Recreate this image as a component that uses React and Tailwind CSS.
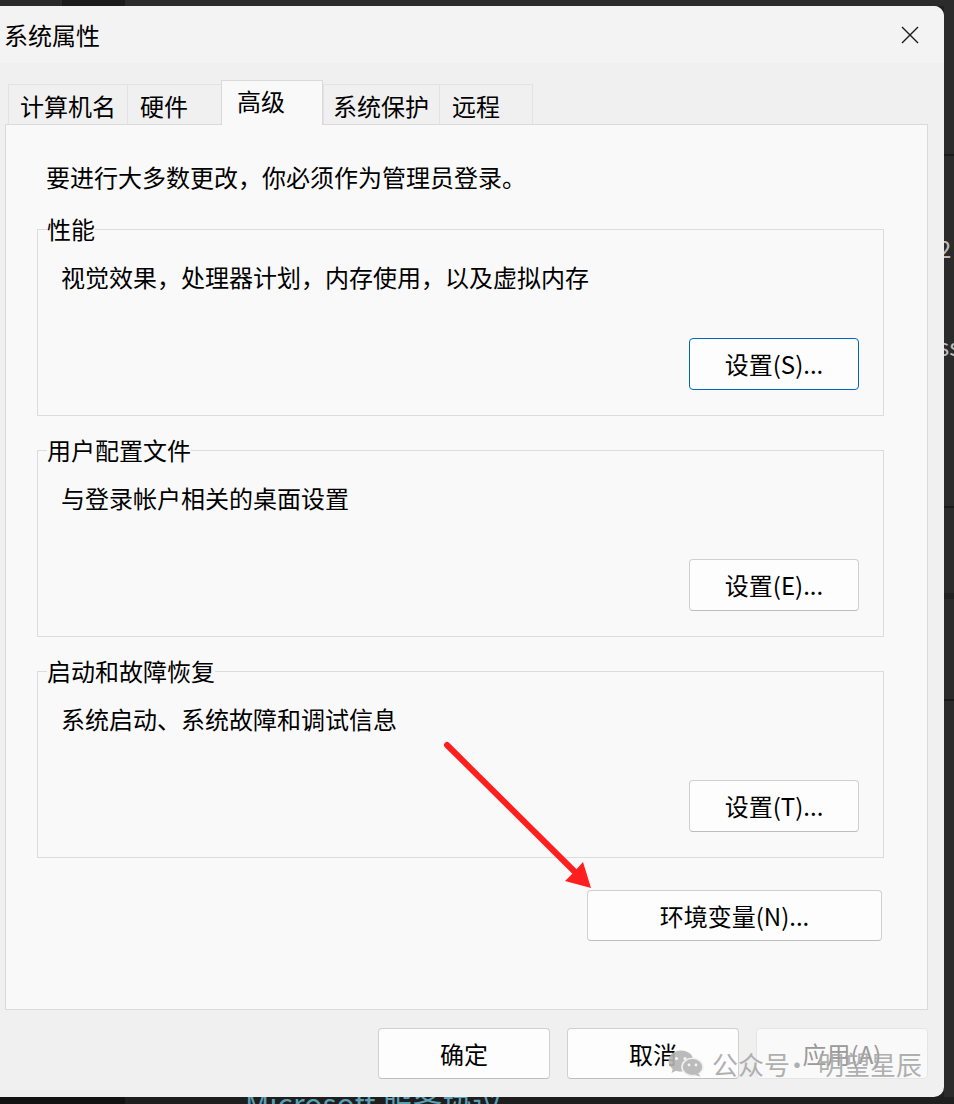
import React from "react";

const font = "font-['Noto_Sans_CJK_SC',sans-serif]";

const tabs = [
  { label: "计算机名", w: "w-[119px]", pl: "pl-[11px]" },
  { label: "硬件", w: "w-[94px]", pl: "pl-[12px]" },
  { label: "高级", w: "w-[102px]", pl: "pl-[15px]", active: true },
  { label: "系统保护", w: "w-[116px]", pl: "pl-[9px]" },
  { label: "远程", w: "w-[94px]", pl: "pl-[12px]", last: true },
];

const groups = [
  { title: "性能", desc: "视觉效果，处理器计划，内存使用，以及虚拟内存", btn: "设置(S)...", focused: true },
  { title: "用户配置文件", desc: "与登录帐户相关的桌面设置", btn: "设置(E)..." },
  { title: "启动和故障恢复", desc: "系统启动、系统故障和调试信息", btn: "设置(T)..." },
];

const WinButton = ({ children, className = "", focused, disabled }) => (
  <button
    className={`flex items-center justify-center rounded-[4px] border text-[24px] leading-none ${
      focused
        ? "border-[#0067c0] bg-[#fdfdfd] text-black"
        : disabled
        ? "border-[#e5e5e5] bg-[#f9f9f9] text-[#9a9a9a]"
        : "border-[#d0d0d0] border-b-[#bdbdbd] bg-[#fdfdfd] text-black"
    } ${className}`}
  >
    {children}
  </button>
);

const WeChatIcon = () => (
  <svg width="36" height="27" viewBox="0 0 36 27">
    <ellipse cx="13" cy="11" rx="12.5" ry="10.5" fill="#b4b4b4" />
    <path d="M5 18 L3.5 23 L9.5 20 Z" fill="#b4b4b4" />
    <circle cx="8.5" cy="8.5" r="1.6" fill="#f2f2f2" />
    <circle cx="17" cy="8.5" r="1.6" fill="#f2f2f2" />
    <ellipse cx="24.5" cy="17" rx="10.5" ry="8.8" fill="#b4b4b4" stroke="#f0f0f0" strokeWidth="1.6" />
    <path d="M30 23 L32.5 26.5 L26.5 25 Z" fill="#b4b4b4" />
    <circle cx="21" cy="15" r="1.4" fill="#f2f2f2" />
    <circle cx="28" cy="15" r="1.4" fill="#f2f2f2" />
  </svg>
);

export default function App() {
  return (
    <div className={`relative flex h-[1104px] w-[954px] flex-col overflow-hidden bg-[#1f1f1f] ${font}`}>
      {/* top strip of the window behind */}
      <div className="flex h-[6px] shrink-0">
        <div className="w-[62px] bg-[#2a2a2a]" />
        <div className="w-[63px] bg-[#1b1b1b]" />
        <div className="flex-1 bg-[#2b2b2b]" />
      </div>

      <div className="flex h-[1091px] shrink-0">
        {/* dialog */}
        <div className="flex w-[944px] flex-col overflow-hidden rounded-r-[10px] bg-[#f0f0f0]">
          {/* title bar */}
          <div className="flex h-[57px] shrink-0 items-center justify-between bg-[#f3f3f3] pl-[4px] pr-[24px]">
            <span className="text-[24px] leading-6 text-black">系统属性</span>
            <svg width="20" height="20" viewBox="0 0 20 20">
              <path d="M2 2 L18 18 M18 2 L2 18" stroke="#1a1a1a" strokeWidth="1.4" />
            </svg>
          </div>

          <div className="px-[5px] pt-[17px]">
            {/* tabs */}
            <div className="relative z-10 -mb-px flex h-[45px] items-start pl-[3px]">
              {tabs.map((t) =>
                t.active ? (
                  <div
                    key={t.label}
                    className={`${t.w} ${t.pl} h-[45px] border border-b-0 border-[#dadada] bg-[#f9f9f9] pt-[8px] text-[24px] leading-6 text-black`}
                  >
                    {t.label}
                  </div>
                ) : (
                  <div
                    key={t.label}
                    className={`${t.w} ${t.pl} mt-[4px] h-[40px] border-l border-t border-[#e2e2e2] ${
                      t.last ? "border-r" : ""
                    } bg-[#f0f0f0] pt-[9px] text-[24px] leading-6 text-black`}
                  >
                    {t.label}
                  </div>
                )
              )}
            </div>

            {/* tab page */}
            <div className="h-[886px] w-[923px] border border-[#dadada] bg-[#f9f9f9] pt-[40px]">
              <div className="pl-[40px] text-[24px] leading-6 text-black">
                要进行大多数更改，你必须作为管理员登录。
              </div>

              <div className="mt-[28px] flex w-[878px] flex-col pl-[31px]">
                {groups.map((g, i) => (
                  <fieldset
                    key={g.title}
                    className={`w-[847px] border border-[#dcdcdc] ${i > 0 ? "mt-[22px]" : ""}`}
                  >
                    <legend className="ml-[9px] text-[24px] leading-6 text-black">{g.title}</legend>
                    <div className="mt-[24px] pl-[23px] text-[24px] leading-6 text-black">{g.desc}</div>
                    <div className="mb-[25px] mt-[49px] flex justify-end pr-[24px]">
                      <WinButton focused={g.focused} className="h-[52px] w-[170px]">
                        {g.btn}
                      </WinButton>
                    </div>
                  </fieldset>
                ))}

                <div className="mt-[32px] flex justify-end pr-[2px]">
                  <WinButton className="h-[51px] w-[295px]">环境变量(N)...</WinButton>
                </div>
              </div>
            </div>
          </div>

          {/* dialog buttons */}
          <div className="flex justify-end gap-[17px] pr-[16px] pt-[18px]">
            <WinButton className="h-[51px] w-[172px]">确定</WinButton>
            <WinButton className="h-[51px] w-[172px]">取消</WinButton>
            <WinButton disabled className="h-[51px] w-[172px]">应用(A)</WinButton>
          </div>
        </div>

        {/* window behind, right edge */}
        <div className="flex w-[10px] flex-col overflow-hidden bg-[#2b2b2b]">
          <div className="h-[148px] shrink-0" />
          <div className="h-[2px] shrink-0 bg-[#1a1a1a]" />
          <div className="mt-[80px] -ml-[6px] text-[24px] leading-6 text-[#bdbdbd]">2</div>
          <div className="mt-[74px] -ml-[6px] text-[24px] leading-6 text-[#bdbdbd]">ss</div>
          <div className="mt-[148px] h-[2px] shrink-0 bg-[#1a1a1a]" />
          <div className="mt-[85px] h-[6px] shrink-0 bg-[#222222]" />
          <div className="mt-[100px] h-[2px] shrink-0 bg-[#1a1a1a]" />
        </div>
      </div>

      {/* bottom strip of the window behind */}
      <div className="flex h-[7px] shrink-0 overflow-hidden">
        <div className="w-[125px] bg-[#121212]" />
        <div className="flex-1 bg-[#1e1e1e] pl-[120px]">
          <div className="-mt-[10px] whitespace-nowrap text-[30px] leading-none text-[#5a9fb5]">
            Microsoft 服务协议
          </div>
        </div>
      </div>

      {/* red annotation arrow */}
      <svg className="pointer-events-none absolute left-0 top-0" width="954" height="1104">
        <line x1="447" y1="745" x2="576" y2="873" stroke="#ff1f1f" strokeWidth="6" strokeLinecap="round" />
        <polygon points="591,888 565,881 574,872 583,862" fill="#ff1f1f" />
      </svg>

      {/* watermark */}
      <div className="pointer-events-none absolute left-[668px] top-[1050px] flex items-center text-[26px] leading-none text-[#a8a8a8] opacity-90">
        <WeChatIcon />
        <span className="ml-[8px]">公众号</span>
        <span className="-ml-[6px]">·</span>
        <span className="ml-[8px]">明望星辰</span>
      </div>
    </div>
  );
}
